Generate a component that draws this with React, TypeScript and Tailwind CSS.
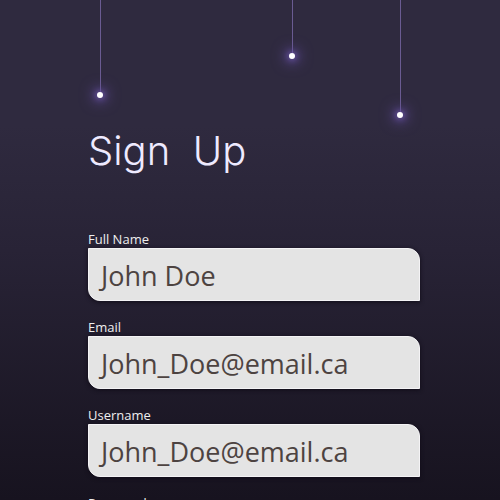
import React from "react";

const fields = [
  { id: "full-name", label: "Full Name", type: "text", placeholder: "John Doe" },
  { id: "email", label: "Email", type: "email", placeholder: "John_Doe@email.ca" },
  { id: "username", label: "Username", type: "text", placeholder: "John_Doe@email.ca" },
  { id: "password", label: "Password", type: "password", placeholder: "Password" },
];

function HangingLight({ place }: { place: string }) {
  return (
    <div className={`absolute top-0 flex w-2 flex-col items-center ${place}`}>
      <div className="w-px flex-1 bg-[#6a5b92]" />
      <div className="size-1.5 rounded-full bg-white shadow-[0_0_6px_1px_#6f58b0,0_0_14px_4px_#5c4892]" />
    </div>
  );
}

export default function App() {
  return (
    <main className="relative h-screen overflow-y-auto bg-linear-to-b from-[#2f2a3f] from-25% via-[#282336] via-50% to-[#17131f] pr-20 pl-[88px] font-['Open_Sans','Noto_Sans',sans-serif] [scrollbar-width:none]">
      <div aria-hidden="true">
        <HangingLight place="left-24 h-[98px]" />
        <HangingLight place="left-72 h-[59px]" />
        <HangingLight place="right-24 h-[118px]" />
      </div>

      <h1 className="pt-[126px] font-['Inter','Liberation_Sans',sans-serif] text-[40px] leading-[50px] font-light whitespace-pre text-[#eeeaff]">
        {"Sign  Up"}
      </h1>

      <form className="flex flex-col gap-[17px] pt-[54px] pb-20">
        {fields.map((field) => (
          <div key={field.id} className="flex flex-col">
            <label htmlFor={field.id} className="text-[13px] leading-[18px] text-[#eeeeee]">
              {field.label}
            </label>
            <input
              id={field.id}
              type={field.type}
              placeholder={field.placeholder}
              className="h-[53px] w-full rounded-tr-xl rounded-bl-xl border border-[#f4f3f5] bg-[#e4e4e4] px-2 pt-0.5 indent-1 text-[27px] text-[#4d4341] shadow-[0_1px_4px_#100c18] outline-none placeholder:text-[#4d4341] placeholder:opacity-100"
            />
          </div>
        ))}
      </form>
    </main>
  );
}
